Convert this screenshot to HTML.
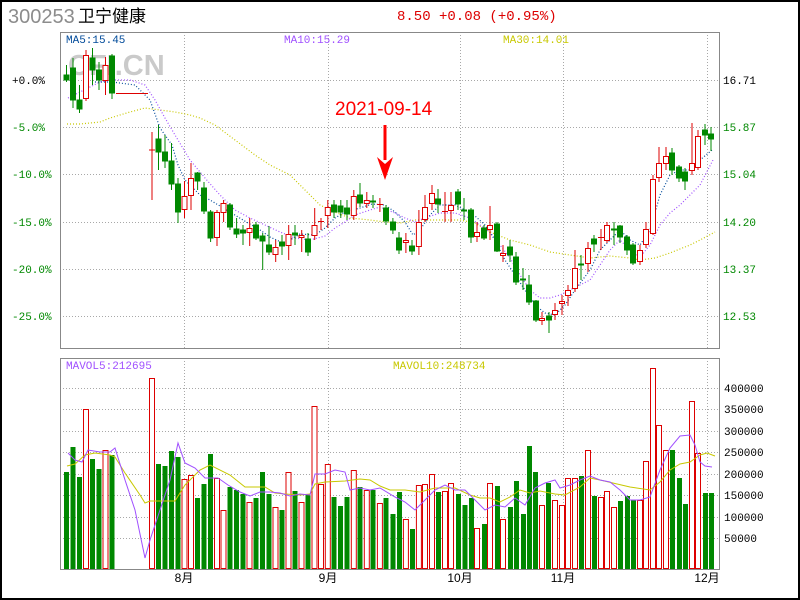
<!DOCTYPE html>
<html><head><meta charset="utf-8"><style>
html,body{margin:0;padding:0;background:#fff}
#w{position:relative;width:796px;height:596px;border:2px solid #000;overflow:hidden;background:#fff}
svg{position:absolute;left:-2px;top:-2px}
</style></head><body><div id="w">
<svg width="800" height="600" viewBox="0 0 800 600" xmlns="http://www.w3.org/2000/svg" font-family="Liberation Mono, monospace">
<text x="8" y="23" font-family="Liberation Sans, sans-serif" font-size="20" fill="#8c8c8c">300253</text>
<text x="78" y="22" font-family="Liberation Sans, 'Noto Sans CJK SC', sans-serif" font-size="17" fill="#000">卫宁健康</text>
<text x="397" y="20" font-size="14" fill="#dd0000">8.50 +0.08 (+0.95%)</text>
<text x="68" y="75" font-family="Liberation Sans, sans-serif" font-weight="bold" font-size="29" fill="#cacaca">CFI.CN</text>
<!-- grid price -->
<g stroke="#a8a8a8" stroke-dasharray="1,2" stroke-width="1">
<path d="M60 80.5H720M60 127.5H720M60 174.5H720M60 222.5H720M60 269.5H720M60 316.5H720"/>
<path d="M184.5 32V348M328.5 32V348M460.5 32V348M563.5 32V348M707.5 32V348"/>
<path d="M60 388.5H720M60 409.5H720M60 431.5H720M60 452.5H720M60 474.5H720M60 495.5H720M60 517.5H720M60 538.5H720"/>
<path d="M184.5 358V569M328.5 358V569M460.5 358V569M563.5 358V569M707.5 358V569"/>
</g>
<rect x="60.5" y="32.5" width="659" height="316" fill="none" stroke="#888"/>
<rect x="60.5" y="358.5" width="659" height="211" fill="none" stroke="#888"/>
<g font-size="11">
<text x="66" y="43" fill="#004a9a">MA5:15.45</text>
<text x="284" y="43" fill="#a050ff">MA10:15.29</text>
<text x="503" y="43" fill="#c8c800">MA30:14.01</text>
<text x="66" y="369" fill="#a050ff">MAVOL5:212695</text>
<text x="393" y="369" fill="#c8c800">MAVOL10:248734</text>
<text x="12" y="84" fill="#000">+0.0%</text>
<g fill="#008800"><text x="12" y="131">-5.0%</text><text x="12" y="178">-10.0%</text><text x="12" y="226">-15.0%</text><text x="12" y="273">-20.0%</text><text x="12" y="320">-25.0%</text>
<text x="723" y="131">15.87</text><text x="723" y="178">15.04</text><text x="723" y="226">14.20</text><text x="723" y="273">13.37</text><text x="723" y="320">12.53</text></g>
<text x="723" y="84" fill="#000">16.71</text>
<g fill="#000"><text x="724" y="392">400000</text><text x="724" y="413">350000</text><text x="724" y="435">300000</text><text x="724" y="456">250000</text><text x="724" y="478">200000</text><text x="724" y="499">150000</text><text x="724" y="521">100000</text><text x="724" y="542">50000</text></g>
</g>
<g font-family="Liberation Sans, 'Noto Sans CJK SC', sans-serif" font-size="12" fill="#000" text-anchor="middle">
<text x="184" y="582">8月</text><text x="328" y="582">9月</text><text x="460" y="582">10月</text><text x="563" y="582">11月</text><text x="707" y="582">12月</text></g>
<!-- MA lines -->
<g fill="none" stroke-dasharray="1,2" stroke-width="1.2">
<polyline stroke="#c8c800" points="67,124 80,124 100,122 110,118 130,112 145,108 160,110 175,112 190,115 200,118 215,125 235,140 255,155 270,165 290,175 305,190 320,205 335,212 350,218 370,220 385,222 400,223 415,220 440,220 460,220 475,223 490,232 510,240 530,245 550,252 570,255 590,258 610,256 630,258 640,260 655,258 670,253 690,245 700,240 715,232"/>
<polyline stroke="#a050ff" points="68,98 80,92 100,82 110,80 130,80 145,85 155,100 165,118 175,135 190,160 205,178 220,195 235,210 250,218 265,225 280,232 295,238 310,240 325,236 335,228 345,222 355,215 370,210 380,207 395,213 405,218 415,222 425,218 440,213 455,213 470,218 480,225 490,232 500,245 510,258 520,275 530,290 540,298 550,298 560,295 570,290 580,285 590,280 600,265 610,250 620,240 630,250 640,257 650,245 660,225 670,213 680,205 690,195 700,185 713,160"/>
<polyline stroke="#004a9a" points="95,82 112,82 135,85 150,100 160,128 172,145 178,165 185,180 200,195 210,200 230,212 243,220 260,230 270,237 283,243 290,240 300,234 315,235 325,228 335,218 345,212 360,208 372,204 385,205 395,212 405,222 413,235 420,230 430,215 440,205 455,205 465,210 475,216 485,225 495,240 505,260 515,275 525,290 535,305 545,313 555,315 565,305 575,290 590,270 600,250 610,240 620,230 630,240 640,245 650,230 660,195 670,175 680,170 690,170 700,160 712,150"/>
</g>
<path d="M116 93.5H148" stroke="#dd0000"/>
<!-- green candles -->
<g stroke="#008800" fill="#008800">
<path d="M66.5 65V82M73 58V108M79.5 85V113M92.5 48V85M99 62V90M112 54V99M158.5 125V170M165 135V168M171.5 143V190M178 178V223M197.6 172V190M204 182V214M210.6 210V242M230 203V230M236.6 218V238M243 225V245M256 222V240M262.7 233V270M269 226V255M282 235V255M295 225V245M308 233V256M334 200V218M340.8 200V218M347 200V220M360 183V207M373 195V208M386 205V225M392.9 218V234M399 232V254M412 240V255M438 189V213M458 189V210M464 198V220M471 208V243M484 225V240M497 222V252M510 240V262M516 252V285M523 268V290M529 275V305M536 300V322M549 312V333M581 255V280M594 235V252M614 222V245M620 225V243M627 235V255M633 243V265M672 148V175M679 165V182M685 168V190M705 124V145M711 127V151" fill="none"/>
<rect x="64" y="75" width="5" height="5"/><rect x="70.5" y="68" width="5" height="32"/><rect x="77" y="100" width="5" height="9"/><rect x="90" y="58" width="5" height="12"/><rect x="96.5" y="70" width="5" height="10"/><rect x="109.5" y="56" width="5" height="37"/>
<rect x="156" y="139" width="5" height="13"/><rect x="162.5" y="152" width="5" height="9"/><rect x="169" y="161" width="5" height="23"/><rect x="175.5" y="184" width="5" height="28"/><rect x="195" y="173" width="5" height="8"/><rect x="201.5" y="188" width="5" height="23"/><rect x="208" y="212" width="5" height="26"/><rect x="227.5" y="205" width="5" height="22"/><rect x="234" y="229" width="5" height="5"/><rect x="240.5" y="230" width="5" height="3"/><rect x="253.5" y="225" width="5" height="13"/><rect x="260" y="236" width="5" height="5"/><rect x="266.5" y="245" width="5" height="7"/><rect x="279.5" y="242" width="5" height="4"/><rect x="292.5" y="233" width="5" height="2"/><rect x="305.5" y="239" width="5" height="13"/><rect x="331.5" y="205" width="5" height="7"/><rect x="338" y="206" width="5" height="6"/><rect x="344.5" y="208" width="5" height="6"/><rect x="357.5" y="195" width="5" height="8"/><rect x="370.5" y="201" width="5" height="1"/><rect x="383.5" y="208" width="5" height="13"/><rect x="390.5" y="222" width="5" height="8"/><rect x="396.5" y="238" width="5" height="12"/><rect x="409.5" y="246" width="5" height="5"/><rect x="435.5" y="199" width="5" height="5"/><rect x="455.5" y="192" width="5" height="12"/><rect x="461.5" y="210" width="5" height="1"/><rect x="468.5" y="210" width="5" height="27"/><rect x="481.5" y="228" width="5" height="10"/><rect x="494.5" y="224" width="5" height="27"/><rect x="507.5" y="247" width="5" height="8"/><rect x="513.5" y="257" width="5" height="25"/><rect x="520.5" y="279" width="5" height="1"/><rect x="526.5" y="285" width="5" height="17"/><rect x="533.5" y="301" width="5" height="19"/><rect x="546.5" y="316" width="5" height="4"/><rect x="578.5" y="264" width="5" height="1"/><rect x="591.5" y="239" width="5" height="5"/><rect x="611.5" y="229" width="5" height="1"/><rect x="617.5" y="226" width="5" height="11"/><rect x="624.5" y="237" width="5" height="13"/><rect x="630.5" y="245" width="5" height="18"/><rect x="669.5" y="153" width="5" height="17"/><rect x="676.5" y="167" width="5" height="11"/><rect x="682.5" y="172" width="5" height="9"/><rect x="702.5" y="130" width="5" height="5"/><rect x="708.5" y="134" width="5" height="5"/>
</g>
<!-- red candles -->
<g stroke="#dd0000" fill="#fff">
<path d="M86 50V101M105.5 57V95M152 132V200M149 150H155M184.5 181V218M191 163V210M217 210V246M223.6 200V222M249.7 218V246M275.7 240V262M288.7 225V260M301.7 230V252M314.7 208V240M321 218V230M318 221.5H324M327.8 200V228M353.8 190V220M366.8 192V208M379.9 198V212M377 204.5H383M405.9 233V253M418.9 210V255M425 195V222M432 185V210M445 192V222M442 211.5H448M451 192V222M477 222V242M490 206V240M503 245V262M542 312V325M555 303V320M562 295V315M568 285V306M575 250V292M588 242V272M601 229V250M598 237.5H604M607 222V243M640 245V265M646 222V248M653 175V235M659 147V182M666 147V170M692 123V175M698 130V170" fill="none"/>
<rect x="83.5" y="55.5" width="5" height="43"/><rect x="103" y="65.5" width="5" height="15"/><rect x="182" y="196.5" width="5" height="13"/><rect x="188.5" y="178.5" width="5" height="17"/><rect x="214.5" y="212.5" width="5" height="25"/><rect x="221" y="203.5" width="5" height="9"/><rect x="247" y="228.5" width="5" height="4"/><rect x="273" y="247.5" width="5" height="7"/><rect x="286" y="234.5" width="5" height="11"/><rect x="299" y="235.5" width="5" height="2"/><rect x="312" y="225.5" width="5" height="10"/><rect x="325.3" y="207.5" width="5" height="8"/><rect x="351.3" y="196.5" width="5" height="19"/><rect x="364.3" y="200.5" width="5" height="3"/><rect x="403.4" y="240.5" width="5" height="2"/><rect x="416.4" y="222.5" width="5" height="24"/><rect x="422.5" y="207.5" width="5" height="12"/><rect x="429.5" y="193.5" width="5" height="10"/><rect x="448.5" y="205.5" width="5" height="5"/><rect x="474.5" y="232.5" width="5" height="4"/><rect x="487.5" y="225.5" width="5" height="4"/><rect x="500.5" y="253.5" width="5" height="2"/><rect x="539.5" y="318.5" width="5" height="2"/><rect x="552.5" y="310.5" width="5" height="4"/><rect x="559.5" y="301.5" width="5" height="2"/><rect x="565.5" y="290.5" width="5" height="5"/><rect x="572.5" y="268.5" width="5" height="20"/><rect x="585.5" y="248.5" width="5" height="15"/><rect x="604.5" y="225.5" width="5" height="15"/><rect x="637.5" y="250.5" width="5" height="11"/><rect x="643.5" y="229.5" width="5" height="15"/><rect x="650.5" y="179.5" width="5" height="54"/><rect x="656.5" y="163.5" width="5" height="14"/><rect x="663.5" y="156.5" width="5" height="7"/><rect x="689.5" y="163.5" width="5" height="7"/><rect x="695.5" y="136.5" width="5" height="31"/>
</g>
<!-- date + arrow -->
<text x="335" y="115" font-family="Liberation Sans, sans-serif" font-size="19" fill="#ff0000">2021-09-14</text>
<path d="M383.5 125H386.5V160H383.5Z M377 157L385 164 393 157 385 180Z" fill="#ff0000"/>
<!-- volume green -->
<g fill="#008800">
<rect x="64" y="472" width="5" height="97"/><rect x="70.5" y="447" width="5" height="122"/><rect x="77" y="477" width="5" height="92"/><rect x="90" y="459" width="5" height="110"/><rect x="96.5" y="469" width="5" height="100"/><rect x="109.5" y="455" width="5" height="114"/>
<rect x="156" y="464" width="5" height="105"/><rect x="162.5" y="466" width="5" height="103"/><rect x="169" y="451" width="5" height="118"/><rect x="175.5" y="457" width="5" height="112"/><rect x="195" y="498" width="5" height="71"/><rect x="201.5" y="484" width="5" height="85"/><rect x="208" y="454" width="5" height="115"/><rect x="227.5" y="487" width="5" height="82"/><rect x="234" y="490" width="5" height="79"/><rect x="240.5" y="494" width="5" height="75"/><rect x="253.5" y="498" width="5" height="71"/><rect x="260" y="472" width="5" height="97"/><rect x="266.5" y="494" width="5" height="75"/><rect x="279.5" y="510" width="5" height="59"/><rect x="292.5" y="491" width="5" height="78"/><rect x="305.5" y="494" width="5" height="75"/><rect x="331.5" y="497" width="5" height="72"/><rect x="338" y="506" width="5" height="63"/><rect x="344.5" y="497" width="5" height="72"/><rect x="357.5" y="487" width="5" height="82"/><rect x="370.5" y="490" width="5" height="79"/><rect x="383.5" y="498" width="5" height="71"/><rect x="390.5" y="514" width="5" height="55"/><rect x="397" y="492" width="5" height="77"/><rect x="410" y="529" width="5" height="40"/><rect x="436" y="492" width="5" height="77"/><rect x="456" y="494" width="5" height="75"/><rect x="462.5" y="505" width="5" height="64"/><rect x="469" y="498" width="5" height="71"/><rect x="482" y="524" width="5" height="45"/><rect x="495" y="486" width="5" height="83"/><rect x="508" y="507" width="5" height="62"/><rect x="514" y="481" width="5" height="88"/><rect x="521" y="514" width="5" height="55"/><rect x="527" y="446" width="5" height="123"/><rect x="533" y="472" width="5" height="97"/><rect x="546" y="483" width="5" height="86"/><rect x="579" y="476" width="5" height="93"/><rect x="592" y="496" width="5" height="73"/><rect x="618" y="501" width="5" height="68"/><rect x="625" y="496" width="5" height="73"/><rect x="631" y="500" width="5" height="69"/><rect x="670" y="450" width="5" height="119"/><rect x="677" y="478" width="5" height="91"/><rect x="683" y="504" width="5" height="65"/><rect x="703" y="493" width="5" height="76"/><rect x="709" y="493" width="5" height="76"/>
</g>
<g fill="#fff" stroke="#dd0000">
<rect x="83.5" y="409.5" width="5" height="159"/><rect x="103" y="450.5" width="5" height="118"/><rect x="149.5" y="378.5" width="5" height="190"/><rect x="182" y="479.5" width="5" height="89"/><rect x="188.5" y="475.5" width="5" height="93"/><rect x="214.5" y="478.5" width="5" height="90"/><rect x="221" y="510.5" width="5" height="58"/><rect x="247" y="502.5" width="5" height="66"/><rect x="273" y="507.5" width="5" height="61"/><rect x="286" y="472.5" width="5" height="96"/><rect x="299" y="502.5" width="5" height="66"/><rect x="312" y="406.5" width="5" height="162"/><rect x="318.5" y="484.5" width="5" height="84"/><rect x="325.3" y="464.5" width="5" height="104"/><rect x="351.3" y="470.5" width="5" height="98"/><rect x="364.3" y="490.5" width="5" height="78"/><rect x="377.4" y="503.5" width="5" height="65"/><rect x="403.4" y="519.5" width="5" height="49"/><rect x="416.4" y="485.5" width="5" height="83"/><rect x="422.5" y="484.5" width="5" height="84"/><rect x="429.5" y="474.5" width="5" height="94"/><rect x="442.5" y="491.5" width="5" height="77"/><rect x="448.5" y="483.5" width="5" height="85"/><rect x="474.5" y="528.5" width="5" height="40"/><rect x="487.5" y="483.5" width="5" height="85"/><rect x="500.5" y="519.5" width="5" height="49"/><rect x="539.5" y="505.5" width="5" height="63"/><rect x="552.5" y="500.5" width="5" height="68"/><rect x="559.5" y="505.5" width="5" height="63"/><rect x="565.5" y="478.5" width="5" height="90"/><rect x="572.5" y="478.5" width="5" height="90"/><rect x="585.5" y="450.5" width="5" height="118"/><rect x="598.5" y="497.5" width="5" height="71"/><rect x="604.5" y="491.5" width="5" height="77"/><rect x="611.5" y="507.5" width="5" height="61"/><rect x="637.5" y="500.5" width="5" height="68"/><rect x="643.5" y="461.5" width="5" height="107"/><rect x="650.5" y="368.5" width="5" height="200"/><rect x="656.5" y="425.5" width="5" height="143"/><rect x="663.5" y="450.5" width="5" height="118"/><rect x="689.5" y="401.5" width="5" height="167"/><rect x="695.5" y="453.5" width="5" height="115"/>
</g>
<g fill="none" stroke-width="1">
<polyline stroke="#c8c800" points="67,466 75,464 85,455 95,453 110,455 115,457 125,473 140,495 145,503 150,501 175,501 185,485 200,470 210,465 230,475 245,487 265,487 275,493 285,494 300,495 310,494 315,484 325,482 345,481 360,479 370,480 380,486 390,490 405,490 420,492 435,488 455,488 470,495 480,498 490,498 500,502 510,497 520,490 530,493 540,491 555,494 565,495 580,487 590,478 600,480 630,487 650,490 660,482 670,470 680,464 690,462 700,455 707,453 715,456"/>
<polyline stroke="#a050ff" points="68,453 75,460 82,462 88,450 100,452 110,452 115,448 125,480 135,510 145,558 150,540 160,510 170,480 178,443 185,463 195,468 205,478 218,478 228,485 240,492 250,496 260,492 270,492 280,493 290,496 300,494 310,495 315,474 325,474 335,470 345,472 350,490 360,488 370,490 380,488 395,497 405,502 415,510 425,500 435,490 445,485 455,490 465,490 475,500 485,510 495,505 505,507 515,498 525,505 535,488 545,483 555,480 560,488 570,485 580,480 590,476 600,480 610,482 620,490 630,500 640,500 650,497 660,470 670,448 680,436 690,435 695,445 700,462 705,466 712,467"/>
</g>
</svg>
</div></body></html>
